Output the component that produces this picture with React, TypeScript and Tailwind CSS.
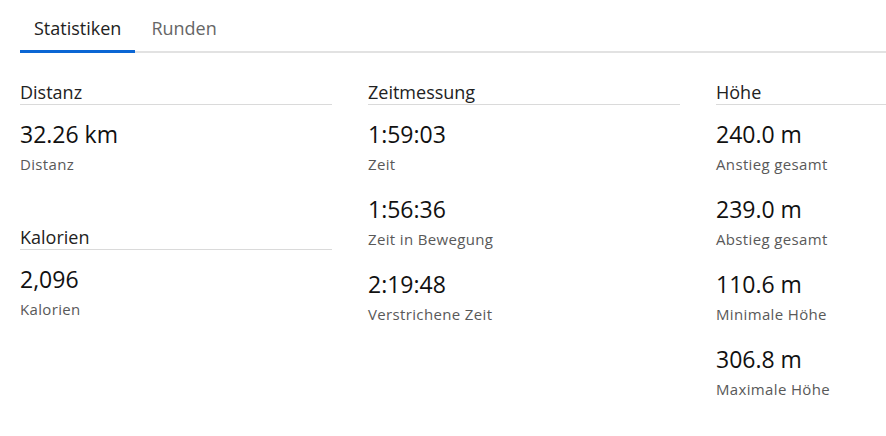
import React from "react";

type Item = { value: string; label: string };
type Section = { title: string; items: Item[] };

const columns: Section[][] = [
  [
    { title: "Distanz", items: [{ value: "32.26 km", label: "Distanz" }] },
    { title: "Kalorien", items: [{ value: "2,096", label: "Kalorien" }] },
  ],
  [
    {
      title: "Zeitmessung",
      items: [
        { value: "1:59:03", label: "Zeit" },
        { value: "1:56:36", label: "Zeit in Bewegung" },
        { value: "2:19:48", label: "Verstrichene Zeit" },
      ],
    },
  ],
  [
    {
      title: "Höhe",
      items: [
        { value: "240.0 m", label: "Anstieg gesamt" },
        { value: "239.0 m", label: "Abstieg gesamt" },
        { value: "110.6 m", label: "Minimale Höhe" },
        { value: "306.8 m", label: "Maximale Höhe" },
      ],
    },
  ],
];

function SectionBlock({ section }: { section: Section }) {
  return (
    <div>
      <div className="text-[18px] leading-6 text-[#222] border-b border-[#dadada]">
        {section.title}
      </div>
      <div className="flex flex-col gap-[19px] pt-[13px]">
        {section.items.map((it) => (
          <div key={it.label}>
            <div className="text-[23px] leading-8 text-[#111]">{it.value}</div>
            <div className="mt-1 text-[15px] tracking-[0.35px] leading-5 text-[#595959]">
              {it.label}
            </div>
          </div>
        ))}
      </div>
    </div>
  );
}

export default function App() {
  return (
    <div className="w-[886px] h-[436px] overflow-hidden bg-white font-['Open_Sans',sans-serif]">
      <div className="pl-5">
        <div className="flex border-b-2 border-[#e2e2e2]">
          <div className="px-[14px] pt-4 pb-[10px] -mb-[2px] text-[18px] leading-6 text-[#222] border-b-[3px] border-[#0b66d4]">
            Statistiken
          </div>
          <div className="pl-4 pr-[14px] pt-4 pb-[10px] -mb-[2px] text-[18px] leading-6 text-[#666] border-b-[3px] border-transparent">
            Runden
          </div>
        </div>
        <div className="flex gap-9 mt-[27px]">
          {columns.map((col, i) => (
            <div key={i} className="w-[312px] shrink-0 flex flex-col gap-[51px]">
              {col.map((s) => (
                <SectionBlock key={s.title} section={s} />
              ))}
            </div>
          ))}
        </div>
      </div>
    </div>
  );
}
